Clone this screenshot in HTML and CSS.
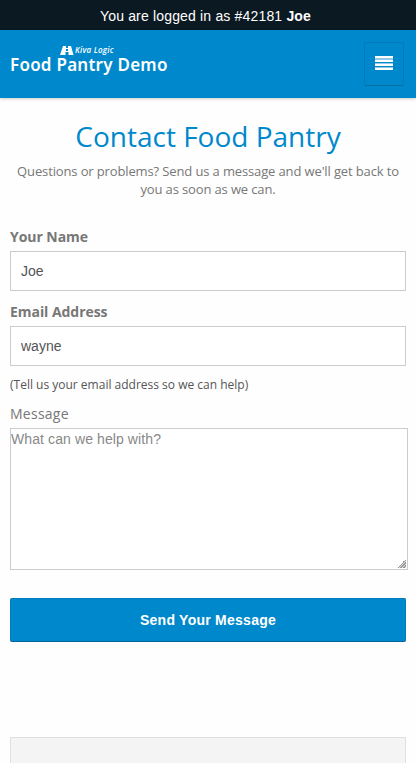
FILE: index.html
```html
<!DOCTYPE html>
<html lang="en">
<head>
  <meta charset="UTF-8">
  <meta name="viewport" content="width=device-width, initial-scale=1">
  <title>Contact Food Pantry</title>
  <link rel="stylesheet" href="styles.css">
</head>
<body>

  <div class="login-bar">You are logged in as #42181 <b>Joe</b></div>

  <header class="navbar">
    <a class="brand" href="#">
      <span class="brand-top">
        <svg class="brand-icon" width="14" height="10" viewBox="0 0 14 10">
          <path fill="#fff" fill-rule="evenodd" d="M3 0h3v2h2V0h3l2.500 9h-5V6H5.500v3H0zM6 3v2h2V3z"/>
        </svg>
        <span class="brand-company">Kiva Logic</span>
      </span>
      <span class="brand-name">Food Pantry Demo</span>
    </a>
    <button class="menu-btn" type="button" aria-label="Menu">
      <svg width="18" height="14" viewBox="0 0 18 14" shape-rendering="crispEdges">
        <path fill="#8fcaeb" d="M0 2h18v2H0z"/>
        <path fill="#fff" d="M0 0h18v2H0zM0 4h18v2H0zM0 8h18v2H0zM0 12h18v2H0z"/>
        <path fill="#8fcaeb" d="M0 7h18v1H0zM0 11h18v1H0z"/>
      </svg>
    </button>
  </header>

  <main class="page">
    <h1 class="title">Contact Food Pantry</h1>
    <p class="intro">Questions or problems? Send us a message and we'll get back to you as soon as we can.</p>

    <form class="contact-form">
      <label class="label" for="name">Your Name</label>
      <input class="field" id="name" type="text" value="Joe">

      <label class="label" for="email">Email Address</label>
      <input class="field" id="email" type="text" value="wayne">
      <div class="hint">(Tell us your email address so we can help)</div>

      <label class="label label-light" for="message">Message</label>
      <textarea class="message" id="message" placeholder="What can we help with?"></textarea>

      <button class="send-btn" type="button">Send Your Message</button>
    </form>

    <div class="footer-box"></div>
  </main>

</body>
</html>
```

FILE: styles.css
```css
* {
  box-sizing: border-box;
}

body {
  margin: 0;
  height: 763px;
  overflow: hidden;
  background: #fefefe;
  color: #777;
  font-family: "Open Sans", sans-serif;
  font-size: 14px;
}

.login-bar {
  height: 30px;
  line-height: 32px;
  background: #0b1a22;
  color: #fff;
  font-family: "Liberation Sans", Arial, sans-serif;
  font-size: 14px;
  letter-spacing: 0.17px;
  text-align: center;
  padding-right: 5px;
}

.navbar {
  display: flex;
  justify-content: space-between;
  height: 68px;
  padding: 12px 12px 0 10px;
  background: #0088cc;
  box-shadow: 0 1px 3px rgba(0, 0, 0, 0.2);
}

.brand {
  display: flex;
  flex-direction: column;
  padding-top: 3px;
  color: #fff;
  text-decoration: none;
}

.brand-top {
  display: flex;
  align-items: flex-start;
  height: 10px;
  padding-left: 50px;
}

.brand-icon {
  margin-top: 1px;
}

.brand-company {
  margin-left: 1px;
  font-size: 8px;
  font-style: italic;
  font-weight: 600;
  line-height: 9px;
  letter-spacing: 0.25px;
}

.brand-name {
  font-family: "Noto Sans", sans-serif;
  font-size: 17px;
  font-weight: 600;
  line-height: 20px;
  letter-spacing: 0.25px;
  white-space: nowrap;
}

.menu-btn {
  display: flex;
  align-items: center;
  justify-content: center;
  width: 40px;
  height: 44px;
  padding: 0 0 2px;
  background: #0088cc;
  border: 1px solid #007ab8;
  border-bottom-color: #006da3;
  border-radius: 2px;
}

.page {
  padding: 0 10px;
}

.title {
  margin: 19px 0 0;
  color: #0088cc;
  font-size: 28px;
  font-weight: 400;
  line-height: 38px;
  text-align: center;
}

.intro {
  margin: 7px 0 0;
  font-size: 13px;
  line-height: 18px;
  letter-spacing: -0.13px;
  text-align: center;
}

.contact-form {
  display: flex;
  flex-direction: column;
  margin-top: 29px;
}

.label {
  height: 24px;
  font-weight: 700;
  line-height: 20px;
  letter-spacing: -0.05px;
}

.label-light {
  font-weight: 400;
  letter-spacing: 0.25px;
}

.field {
  height: 40px;
  margin: 0 0 11px;
  padding: 0 10px;
  background: #fff;
  border: 1px solid #ccc;
  border-radius: 0;
  color: #555;
  font-family: "Liberation Sans", Arial, sans-serif;
  font-size: 14px;
}

.hint {
  height: 27px;
  color: #555;
  font-size: 12px;
  line-height: 16px;
}

.message {
  width: 398px;
  height: 142px;
  margin: 0;
  padding: 0;
  background: #fff;
  border: 1px solid #ccc;
  color: #555;
  font-family: "Liberation Sans", Arial, sans-serif;
  font-size: 14px;
  line-height: 20px;
  letter-spacing: 0.1px;
  resize: both;
}

.message::placeholder {
  color: #888;
}

/* striped grip in the corner */
.message::-webkit-resizer {
  background: linear-gradient(135deg, transparent 50%, #999 50% 58%, #ddd 58% 66%, #999 66% 74%, #ddd 74% 82%, #999 82% 90%, #ddd 90%) right 1px bottom 1px / 9px 9px no-repeat;
}

.send-btn {
  height: 44px;
  margin: 28px 0 0;
  background: #0088cc;
  border: 1px solid #007ab8;
  border-bottom-color: #006699;
  border-radius: 2px;
  color: #fff;
  font-family: "Liberation Sans", Arial, sans-serif;
  font-size: 14px;
  font-weight: 700;
  letter-spacing: 0.25px;
}

.footer-box {
  height: 60px;
  margin-top: 95px;
  background: #f4f4f4;
  border: 1px solid #e0e0e0;
}
```
